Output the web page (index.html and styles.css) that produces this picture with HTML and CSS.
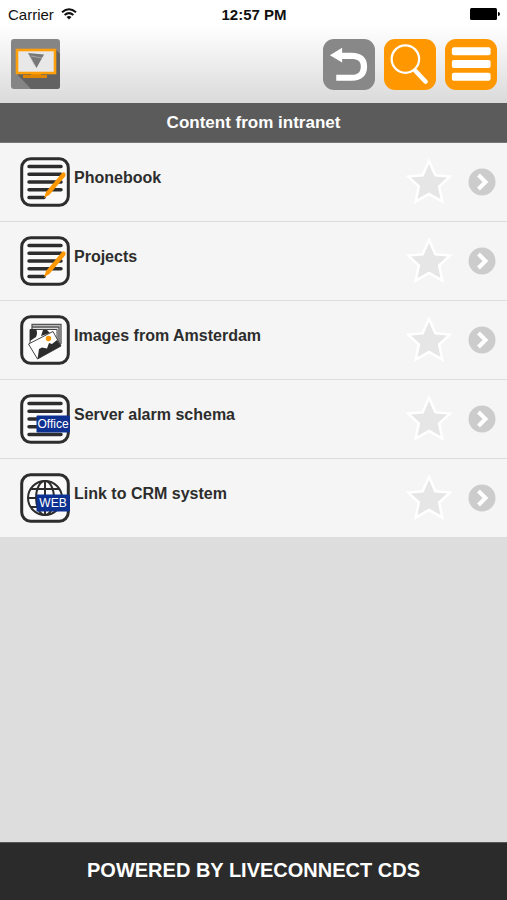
FILE: index.html
```html
<!DOCTYPE html>
<html lang="en">
<head>
<meta charset="utf-8">
<meta name="viewport" content="width=device-width, initial-scale=1">
<title>Content from intranet</title>
<link rel="stylesheet" href="styles.css">
</head>
<body>
<svg class="defs" aria-hidden="true">
  <symbol id="frame" viewBox="0 0 50 50"><rect x="1.700" y="1.700" width="46.600" height="46.600" rx="9" fill="#fafafa" stroke="#2d2d2d" stroke-width="3"/></symbol>
  <symbol id="lines" viewBox="0 0 50 50"><path d="M9 9.500h32M9 17.200h32M9 25h32M9 32.700h32M9 40.500h32" stroke="#2d2d2d" stroke-width="3.500" stroke-linecap="round"/></symbol>
  <symbol id="document" viewBox="0 0 50 50">
    <use href="#frame"/>
    <path d="M9 9.500h32M9 17.200h32M9 25h32M9 32.700h32M9 40.500h15" stroke="#2d2d2d" stroke-width="3.500" stroke-linecap="round"/>
    <path d="M24 41 26 35 41.500 16.500Q43.500 14.500 45 16 46.300 17.500 45 19.500L29.500 37.800Z" fill="#ff9800"/>
  </symbol>
  <symbol id="star" viewBox="0 0 46 46"><path d="M23 5 28.500 17.500 41 18.500 31.800 27 34.500 40 23 33.500 11.500 40 14.200 27 5 18.500 17.500 17.500Z" fill="#e6e6e6" stroke="#fff" stroke-width="5" paint-order="stroke"/></symbol>
  <symbol id="chevron" viewBox="0 0 28 28"><circle cx="14" cy="14" r="13.500" fill="#ccc"/><path d="M10.500 7 17.500 14 10.500 21" fill="none" stroke="#fff" stroke-width="4"/></symbol>
</svg>

<header class="header">
  <div class="status">
    <div class="carrier">Carrier
      <svg width="16" height="12" viewBox="0 0 16 12" fill="none" stroke="#111" stroke-width="2" aria-hidden="true"><path d="M1 4.200Q8-1.800 15 4.200M3.600 7Q8 3.300 12.400 7"/><path d="M8 11.500 5.500 9Q8 7 10.500 9Z" fill="#111" stroke="none"/></svg>
    </div>
    <time class="clock">12:57 PM</time>
    <div class="battery"><svg width="30" height="12" viewBox="0 0 30 12" aria-hidden="true"><rect width="27" height="12" rx="1.500"/><path d="M28 4q2 0 2 2t-2 2z"/></svg></div>
  </div>
  <div class="toolbar">
    <a class="logo" href="#" aria-label="Home">
      <svg width="49" height="50" viewBox="0 0 49 50" aria-hidden="true">
        <rect width="49" height="50" rx="3" fill="#858585"/>
        <path d="M44.500 10 49 15V47q0 3-3 3H20L5 34Z" fill="#626262"/>
        <path d="M20 34h10v2h6v3H12v-3h8z" fill="#df8500"/>
        <rect x="6" y="11" width="38" height="23" fill="#e8e8e8" stroke="#ff9f0a" stroke-width="2.600"/>
        <path d="M17 14 33 15.500 25.500 29Z" fill="#777"/>
        <path d="M18 16 24 27M20 17 31 19" stroke="#bbb" stroke-width=".7"/>
      </svg>
    </a>
    <nav class="actions" aria-label="Tools">
      <button class="tool tool-back" type="button" aria-label="Back"><svg viewBox="0 0 52 52"><path d="M6.500 16.500 19 9v5h9.500C39 14 44.500 19 44.500 28S39 42.500 29 42.500H13v-6h16c6.500 0 9-3 9-8.500s-3-7.500-9.500-7.500H19V24Z" fill="#fff"/></svg></button>
      <button class="tool" type="button" aria-label="Search"><svg viewBox="0 0 52 52" fill="none" stroke="#fff"><circle cx="21.300" cy="20.500" r="14" stroke-width="2.300"/><path d="M29.500 31.500 33 34.500" stroke-width="2.500"/><path d="M32 33 42 43.500" stroke-width="4.500" stroke-linecap="round"/></svg></button>
      <button class="tool" type="button" aria-label="Menu"><svg viewBox="0 0 52 52" fill="#fff"><rect x="6.500" y="8.500" width="39.500" height="8" rx="2"/><rect x="6.500" y="21.500" width="39.500" height="8" rx="2"/><rect x="6.500" y="34.500" width="39.500" height="8" rx="2"/></svg></button>
    </nav>
  </div>
</header>

<h1 class="title">Content from intranet</h1>

<main class="content">
  <ul class="list">
    <li class="row">
      <svg class="icon" viewBox="0 0 50 50" aria-hidden="true"><use href="#document"/></svg>
      <a class="label" href="#">Phonebook</a>
      <button class="star" type="button" aria-label="Add Phonebook to favourites"><svg><use href="#star"/></svg></button>
      <a class="go" href="#" aria-label="Open Phonebook"><svg><use href="#chevron"/></svg></a>
    </li>
    <li class="row">
      <svg class="icon" viewBox="0 0 50 50" aria-hidden="true"><use href="#document"/></svg>
      <a class="label" href="#">Projects</a>
      <button class="star" type="button" aria-label="Add Projects to favourites"><svg><use href="#star"/></svg></button>
      <a class="go" href="#" aria-label="Open Projects"><svg><use href="#chevron"/></svg></a>
    </li>
    <li class="row">
      <svg class="icon" viewBox="0 0 50 50" aria-hidden="true">
        <use href="#frame"/>
        <path d="M12 14V9.500h29v19l-4 3M12 12h27v17" fill="#ddd" stroke="#555" stroke-width="1.300"/>
        <path d="M10 14.500h27V30H10z" fill="#fff" stroke="#444"/>
        <path d="M10 14h6q2 4 0 8l-6 4zM23 15h4l3 3-9 3z" fill="#2d2d2d"/>
        <path d="M8.500 29 33 16.500 41 31 17.500 44Z" fill="#fff" stroke="#444"/>
        <path d="M17.500 44 19 34 22 32.500 27 33.500 29 28 32 29 37 25 41 31Z" fill="#2d2d2d"/>
        <circle cx="28.500" cy="23.500" r="2.700" fill="#ff9800"/>
      </svg>
      <a class="label" href="#">Images from Amsterdam</a>
      <button class="star" type="button" aria-label="Add Images from Amsterdam to favourites"><svg><use href="#star"/></svg></button>
      <a class="go" href="#" aria-label="Open Images from Amsterdam"><svg><use href="#chevron"/></svg></a>
    </li>
    <li class="row">
      <svg class="icon" viewBox="0 0 50 50" aria-hidden="true">
        <use href="#frame"/><use href="#lines"/>
        <rect x="16.500" y="21.500" width="33.500" height="17" rx="1" fill="#0c3190"/>
        <text class="tag" x="33" y="34" text-anchor="middle">Office</text>
      </svg>
      <a class="label" href="#">Server alarm schema</a>
      <button class="star" type="button" aria-label="Add Server alarm schema to favourites"><svg><use href="#star"/></svg></button>
      <a class="go" href="#" aria-label="Open Server alarm schema"><svg><use href="#chevron"/></svg></a>
    </li>
    <li class="row">
      <svg class="icon" viewBox="0 0 50 50" aria-hidden="true">
        <use href="#frame"/>
        <g fill="none" stroke="#2d2d2d" stroke-width="2"><circle cx="25" cy="25" r="17"/><ellipse cx="25" cy="25" rx="9" ry="17"/><path d="M25 8v34M8 25h34M11 16h28M11 34h28"/></g>
        <rect x="16.500" y="21.500" width="33.500" height="17" rx="1" fill="#0c3190"/>
        <text class="tag" x="33" y="34" text-anchor="middle">WEB</text>
      </svg>
      <a class="label" href="#">Link to CRM system</a>
      <button class="star" type="button" aria-label="Add Link to CRM system to favourites"><svg><use href="#star"/></svg></button>
      <a class="go" href="#" aria-label="Open Link to CRM system"><svg><use href="#chevron"/></svg></a>
    </li>
  </ul>
</main>

<footer class="footer">POWERED BY LIVECONNECT CDS</footer>
</body>
</html>
```
FILE: styles.css
```css
* { box-sizing: border-box; }

body {
  margin: 0;
  min-height: 100vh;
  display: flex;
  flex-direction: column;
  background: #ddd;
  color: #2d2d2d;
  font-family: "Liberation Sans", Arial, sans-serif;
}

svg { display: block; }
a { color: inherit; text-decoration: none; }
button { border: 0; padding: 0; background: none; cursor: pointer; }

.defs { position: absolute; width: 0; height: 0; }

.header {
  background: linear-gradient(#fff 0, #fff 25%, #dadada 100%);
  padding-bottom: 13px;
}

.status {
  display: grid;
  grid-template-columns: 1fr auto 1fr;
  align-items: center;
  height: 28px;
  padding: 0 7px 0 8px;
  color: #111;
  font-size: 15px;
}

.carrier { display: flex; align-items: center; gap: 7px; }
.clock { font-weight: bold; }
.battery { justify-self: end; }

.toolbar {
  display: flex;
  justify-content: space-between;
  align-items: flex-start;
  padding: 11px 10px 0 11px;
}

.actions { display: flex; gap: 9px; }

.tool {
  width: 52px;
  height: 51px;
  border-radius: 11px;
  background: #ff9800;
}

.tool-back { background: #888; }
.tool svg { width: 100%; height: 100%; }

.title {
  margin: 0;
  padding-top: 1px;
  background: #5b5b5b;
  border-bottom: 1px solid #777;
  color: #fff;
  font-size: 17px;
  line-height: 38px;
  text-align: center;
}

.content { flex: 1; }

.list { margin: 0; padding: 0; list-style: none; }

.row {
  display: flex;
  align-items: center;
  padding: 14px 11px 14px 20px;
  background: #f5f5f5;
  border-bottom: 1px solid #ddd;
}

.row:last-child { border-bottom: 0; }

.icon { flex: none; width: 50px; height: 50px; }
.tag { fill: #fff; font-size: 12px; }

.label {
  flex: 1;
  align-self: flex-start;
  padding: 10px 0 0 4px;
  font-size: 16px;
  font-weight: bold;
  line-height: 22px;
}

.star, .star svg { width: 46px; height: 46px; }
.star { margin-right: 16px; }
.go, .go svg { width: 28px; height: 28px; }

.footer {
  background: #2b2b2b;
  border-top: 1px solid #555;
  color: #fff;
  font-size: 20px;
  font-weight: bold;
  line-height: 54px;
  padding-bottom: 3px;
  text-align: center;
}
```
